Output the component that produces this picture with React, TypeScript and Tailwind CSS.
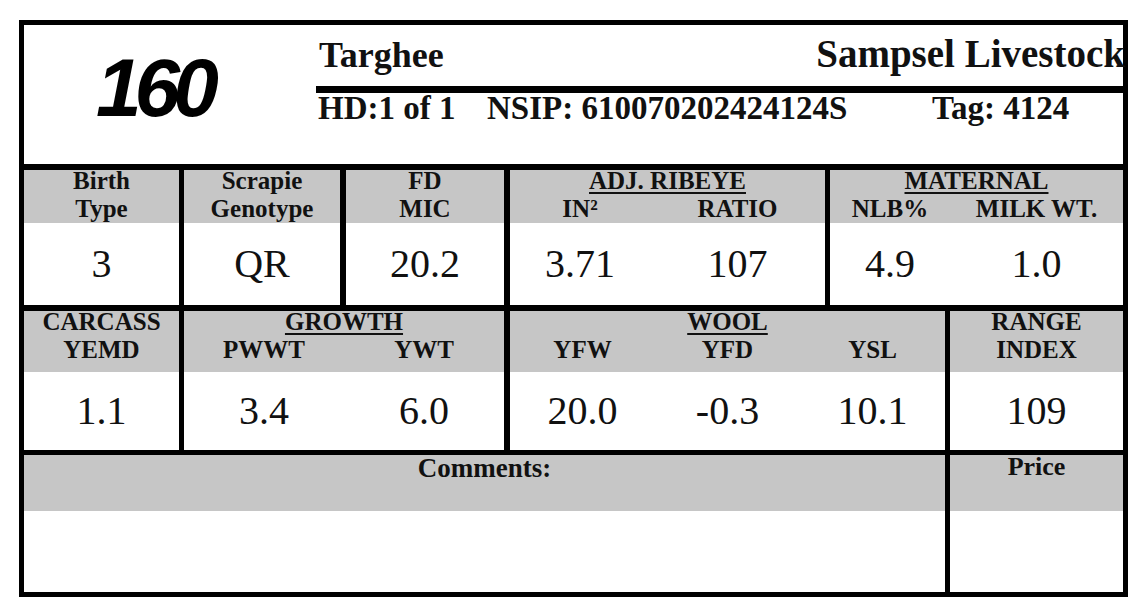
import React from "react";

const headText = "text-[25px] font-bold leading-[28px] text-center -mt-[3px]";
const subHead = "text-[25px] font-bold leading-[28px] text-center";
const valText = "text-[40px] leading-none text-center";
const ul = "underline decoration-2 underline-offset-[3px]";

const Cell = ({
  className,
  grayClass,
  head,
  value,
}: {
  className: string;
  grayClass: string;
  head: React.ReactNode;
  value?: React.ReactNode;
}) => {
  return (
    <div className={`flex flex-col border-black ${className}`}>
      <div className={`bg-[#c6c6c6] ${grayClass}`}>{head}</div>
      <div className="flex-1 flex items-center justify-center bg-white">
        {value}
      </div>
    </div>
  );
};

const App = () => {
  return (
    <div className="w-[1138px] h-[616px] bg-white pt-[20px] pl-[19px] font-['Liberation_Serif','Times_New_Roman',serif] text-[#111]">
      <div className="w-[1109px] h-[577px] border-[5px] border-black flex flex-col">
        {/* header */}
        <div className="h-[145px] flex border-b-[6px] border-black">
          <div className="w-[292px] pl-[72px] pt-[22px]">
            <span className="font-['Liberation_Sans',Arial,sans-serif] italic font-bold text-[82px] leading-none tracking-[-7px] text-black">
              160
            </span>
          </div>
          <div className="flex-1 flex flex-col pt-[9px]">
            <div className="flex items-baseline justify-between pl-[3px] font-bold leading-none">
              <span className="text-[36px]">Targhee</span>
              <span className="text-[39px] -mr-[2px]">Sampsel Livestock</span>
            </div>
            <div className="h-[7px] bg-black mt-[13px]" />
            <div className="flex pl-[2px] text-[33px] font-bold leading-[30px]">
              <span className="w-[169px]">HD:1 of 1</span>
              <span className="w-[445px]">NSIP: 610070202424124S</span>
              <span>Tag: 4124</span>
            </div>
          </div>
        </div>

        {/* row 1 */}
        <div className="h-[141px] flex border-b-[6px] border-black">
          <Cell
            className="w-[155px]"
            grayClass="h-[53px]"
            head={
              <div className={headText}>
                Birth
                <br />
                Type
              </div>
            }
            value={<span className={valText}>3</span>}
          />
          <Cell
            className="w-[161px] border-l-[5px]"
            grayClass="h-[53px]"
            head={
              <div className={headText}>
                Scrapie
                <br />
                Genotype
              </div>
            }
            value={<span className={valText}>QR</span>}
          />
          <Cell
            className="w-[164px] border-l-[6px]"
            grayClass="h-[53px]"
            head={
              <div className={headText}>
                FD
                <br />
                MIC
              </div>
            }
            value={<span className={valText}>20.2</span>}
          />
          <div className="w-[321px] border-l-[6px] border-black flex flex-col">
            <div className="h-[53px] bg-[#c6c6c6]">
              <div className={headText}>
                <span className={ul}>ADJ. RIBEYE</span>
              </div>
              <div className={`grid grid-cols-[140px_1fr] ${subHead}`}>
                <span>IN²</span>
                <span>RATIO</span>
              </div>
            </div>
            <div className="flex-1 grid grid-cols-[140px_1fr] items-center">
              <span className={valText}>3.71</span>
              <span className={valText}>107</span>
            </div>
          </div>
          <div className="flex-1 border-l-[5px] border-black flex flex-col">
            <div className="h-[53px] bg-[#c6c6c6]">
              <div className={headText}>
                <span className={ul}>MATERNAL</span>
              </div>
              <div className={`grid grid-cols-[120px_1fr] ${subHead}`}>
                <span>NLB%</span>
                <span>MILK WT.</span>
              </div>
            </div>
            <div className="flex-1 grid grid-cols-[120px_1fr] items-center">
              <span className={valText}>4.9</span>
              <span className={valText}>1.0</span>
            </div>
          </div>
        </div>

        {/* row 2 */}
        <div className="h-[144px] flex border-b-[5px] border-black">
          <Cell
            className="w-[155px]"
            grayClass="h-[61px]"
            head={
              <div className={headText}>
                CARCASS
                <br />
                YEMD
              </div>
            }
            value={<span className={valText}>1.1</span>}
          />
          <div className="w-[325px] border-l-[5px] border-black flex flex-col">
            <div className="h-[61px] bg-[#c6c6c6]">
              <div className={headText}>
                <span className={ul}>GROWTH</span>
              </div>
              <div className={`grid grid-cols-2 ${subHead}`}>
                <span>PWWT</span>
                <span>YWT</span>
              </div>
            </div>
            <div className="flex-1 grid grid-cols-2 items-center">
              <span className={valText}>3.4</span>
              <span className={valText}>6.0</span>
            </div>
          </div>
          <div className="w-[441px] border-l-[6px] border-black flex flex-col">
            <div className="h-[61px] bg-[#c6c6c6]">
              <div className={headText}>
                <span className={ul}>WOOL</span>
              </div>
              <div className={`grid grid-cols-3 ${subHead}`}>
                <span>YFW</span>
                <span>YFD</span>
                <span>YSL</span>
              </div>
            </div>
            <div className="flex-1 grid grid-cols-3 items-center">
              <span className={valText}>20.0</span>
              <span className={valText}>-0.3</span>
              <span className={valText}>10.1</span>
            </div>
          </div>
          <Cell
            className="flex-1 border-l-[5px]"
            grayClass="h-[61px]"
            head={
              <div className={headText}>
                RANGE
                <br />
                INDEX
              </div>
            }
            value={<span className={valText}>109</span>}
          />
        </div>

        {/* row 3 */}
        <div className="flex-1 flex">
          <Cell
            className="w-[921px]"
            grayClass="h-[56px]"
            head={
              <div className="text-[27px] font-bold leading-[28px] text-center -mt-[1px]">
                Comments:
              </div>
            }
          />
          <Cell
            className="flex-1 border-l-[5px]"
            grayClass="h-[56px]"
            head={
              <div className="text-[26px] font-bold leading-[28px] text-center -mt-[2px]">
                Price
              </div>
            }
          />
        </div>
      </div>
    </div>
  );
};

export default App;
